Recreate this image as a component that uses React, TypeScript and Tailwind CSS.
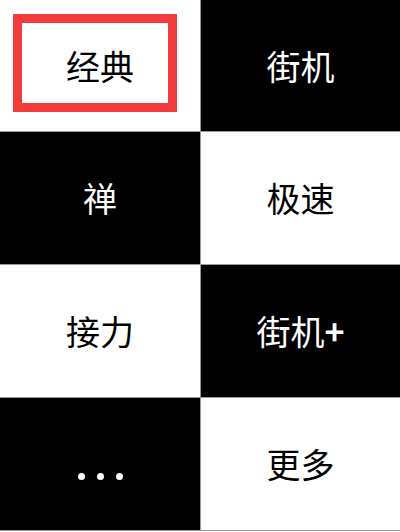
const cells = [
  { label: '经典', dark: false },
  { label: '街机', dark: true },
  { label: '禅', dark: true },
  { label: '极速', dark: false },
  { label: '接力', dark: false },
  { label: '街机', plus: true, dark: true },
  { label: 'more', dark: true },
  { label: '更多', dark: false },
];

export default function App() {
  return (
    <div
      className="w-[400px] h-[532px] bg-white overflow-hidden"
      style={{ fontFamily: '"Noto Sans CJK SC", "Noto Sans", sans-serif' }}
    >
      <div className="grid grid-cols-[200px_199px] grid-rows-[131px_132px_132px_132px] gap-px bg-[#9a9a9a] border-b border-[#9a9a9a]">
        {cells.map((c, i) => (
          <div
            key={i}
            className={
              'relative flex items-center justify-center text-[34px] leading-none ' +
              (c.dark ? 'bg-black text-white' : 'bg-white text-black')
            }
          >
            {c.label === 'more' ? (
              <div className="flex gap-[12px] mt-[24px]">
                <div className="w-[7px] h-[7px] rounded-full bg-white" />
                <div className="w-[7px] h-[7px] rounded-full bg-white" />
                <div className="w-[7px] h-[7px] rounded-full bg-white" />
              </div>
            ) : (
              <span>
                {c.label}
                {c.plus && <span className="font-bold">+</span>}
              </span>
            )}
            {i === 0 && (
              <div className="absolute left-[13px] top-[14px] w-[164px] h-[98px] border-[9px] border-[#f23b3b]" />
            )}
          </div>
        ))}
      </div>
    </div>
  );
}
